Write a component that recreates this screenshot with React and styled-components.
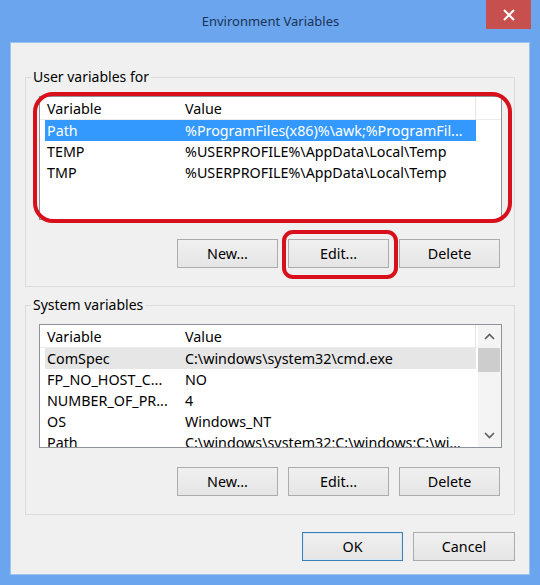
import React from "react";
import styled, { createGlobalStyle } from "styled-components";

const GlobalStyle = createGlobalStyle`
  html, body {
    margin: 0;
    padding: 0;
    background: #6ba5ee;
  }
  body {
    font-family: "Noto Sans", "Open Sans", sans-serif;
    color: #000;
  }
  * { box-sizing: border-box; }
`;

const Window = styled.div`
  width: 540px;
  height: 585px;
  background: #6ba5ee;
  display: flex;
  flex-direction: column;
  padding: 0 10px 10px 10px;
`;

const TitleBar = styled.div`
  height: 42px;
  display: grid;
  grid-template-columns: 1fr auto 1fr;
  align-items: start;
  margin-right: -1px;
`;

const Title = styled.div`
  grid-column: 2;
  font-size: 13px;
  line-height: 42px;
  color: #1a3456;
`;

const CloseButton = styled.div`
  grid-column: 3;
  justify-self: end;
  width: 45px;
  height: 29px;
  background: #c7504f;
  display: flex;
  align-items: center;
  justify-content: center;
`;

const Client = styled.div`
  flex: 1;
  background: #f0f0f0;
  border: 1px solid #9cc3f2;
  padding: 25px 14px 13px 14px;
  display: flex;
  flex-direction: column;
`;

const Group = styled.fieldset`
  margin: ${(p) => (p.$first ? "0" : "9px 0 0 0")};
  min-width: 0;
  border: 1px solid #dcdcdc;
  padding: 10px 12px 18px 13px;
  display: flex;
  flex-direction: column;
`;

const Legend = styled.legend`
  font-size: 14px;
  line-height: 18px;
  padding: 0 2px;
  margin-left: -8px;
`;

const ListBox = styled.div`
  position: relative;
  height: 124px;
  background: #fff;
  border: 1px solid #8f9399;
  display: flex;
`;

const ListContent = styled.div`
  flex: 1;
  min-width: 0;
  overflow: hidden;
`;

const HeaderRow = styled.div`
  height: 23px;
  border-bottom: 1px solid #ececec;
  display: grid;
  grid-template-columns: 138px 293px 1fr;
  padding-left: 5px;
  font-size: 14.3px;
  align-items: center;
`;

const HeaderCell = styled.div`
  height: 100%;
  display: flex;
  align-items: center;
  padding-left: 2px;
  border-right: ${(p) => (p.$divider ? "1px solid #e5e5e5" : "none")};
`;

const Row = styled.div`
  margin-left: 5px;
  width: 431px;
  height: 21px;
  display: grid;
  grid-template-columns: 138px 293px;
  align-items: center;
  font-size: 14.3px;
  background: ${(p) =>
    p.$state === "active" ? "#3399ff" : p.$state === "inactive" ? "#e6e6e6" : "transparent"};
  color: ${(p) => (p.$state === "active" ? "#fff" : "#000")};
`;

const Cell = styled.div`
  padding-left: 2px;
  white-space: nowrap;
  overflow: hidden;
  line-height: 21px;
`;

const ScrollBar = styled.div`
  width: 23px;
  background: #f4f4f4;
  display: flex;
  flex-direction: column;
`;

const ScrollArrow = styled.div`
  height: 23px;
  display: flex;
  align-items: center;
  justify-content: center;
`;

const ScrollTrack = styled.div`
  flex: 1;
  display: flex;
  flex-direction: column;
`;

const ScrollThumb = styled.div`
  height: 24px;
  margin-right: 1px;
  background: #cdcdcd;
`;

const ButtonRow = styled.div`
  display: flex;
  justify-content: flex-end;
  gap: 10px;
  margin-top: ${(p) => p.$top || 19}px;
  padding-right: ${(p) => p.$inset || 0}px;
`;

const Button = styled.div`
  position: relative;
  width: ${(p) => p.$w || 101}px;
  height: 29px;
  border: 1px solid ${(p) => (p.$default ? "#3c7fb1" : "#acacac")};
  box-shadow: ${(p) => (p.$default ? "inset 0 0 0 1px #d5e8f8" : "none")};
  background: linear-gradient(#f0f0f0, #e5e5e5);
  display: flex;
  align-items: center;
  justify-content: center;
  font-size: 14.3px;
  color: #000;
`;

/* hand-drawn red callout ring over a control */
const Callout = styled.span`
  position: absolute;
  top: ${(p) => p.$t}px;
  left: ${(p) => p.$l}px;
  right: ${(p) => p.$r}px;
  bottom: ${(p) => p.$b}px;
  border: 4px solid #d8101c;
  border-radius: ${(p) => p.$radius}px;
  pointer-events: none;
  z-index: 2;
`;

const Chevron = ({ up }) => (
  <svg width="11" height="7" viewBox="0 0 11 7">
    <polyline
      points={up ? "1,6 5.5,1.5 10,6" : "1,1 5.5,5.5 10,1"}
      fill="none"
      stroke="#606060"
      strokeWidth="1.7"
    />
  </svg>
);

const userVars = [
  ["Path", "%ProgramFiles(x86)%\\awk;%ProgramFil...", "active"],
  ["TEMP", "%USERPROFILE%\\AppData\\Local\\Temp"],
  ["TMP", "%USERPROFILE%\\AppData\\Local\\Temp"],
];

const systemVars = [
  ["ComSpec", "C:\\windows\\system32\\cmd.exe", "inactive"],
  ["FP_NO_HOST_C...", "NO"],
  ["NUMBER_OF_PR...", "4"],
  ["OS", "Windows_NT"],
  ["Path", "C:\\windows\\system32;C:\\windows;C:\\wi..."],
];

const Header = () => (
  <HeaderRow>
    <HeaderCell>Variable</HeaderCell>
    <HeaderCell $divider>Value</HeaderCell>
  </HeaderRow>
);

const Rows = ({ items }) =>
  items.map(([name, value, state]) => (
    <Row key={name + value} $state={state}>
      <Cell>{name}</Cell>
      <Cell>{value}</Cell>
    </Row>
  ));

export default function App() {
  return (
    <>
      <GlobalStyle />
      <Window>
        <TitleBar>
          <Title>Environment Variables</Title>
          <CloseButton>
            <svg width="12" height="12" viewBox="0 0 12 12">
              <path d="M1 1 L11 11 M11 1 L1 11" stroke="#fff" strokeWidth="2" />
            </svg>
          </CloseButton>
        </TitleBar>
        <Client>
          <Group $first>
            <Legend>User variables for</Legend>
            <ListBox>
              <ListContent>
                <Header />
                <Rows items={userVars} />
              </ListContent>
              <Callout $t={-5} $l={-7} $r={-11} $b={-4} $radius={20} />
            </ListBox>
            <ButtonRow $inset={2}>
              <Button>New...</Button>
              <Button>
                Edit...
                <Callout $t={-10} $l={-7} $r={-10} $b={-12} $radius={11} />
              </Button>
              <Button>Delete</Button>
            </ButtonRow>
          </Group>
          <Group>
            <Legend>System variables</Legend>
            <ListBox>
              <ListContent>
                <Header />
                <Rows items={systemVars} />
              </ListContent>
              <ScrollBar>
                <ScrollArrow>
                  <Chevron up />
                </ScrollArrow>
                <ScrollTrack>
                  <ScrollThumb />
                </ScrollTrack>
                <ScrollArrow>
                  <Chevron />
                </ScrollArrow>
              </ScrollBar>
            </ListBox>
            <ButtonRow $inset={2}>
              <Button>New...</Button>
              <Button>Edit...</Button>
              <Button>Delete</Button>
            </ButtonRow>
          </Group>
          <ButtonRow $top={17}>
            <Button $default>OK</Button>
            <Button $w={102}>Cancel</Button>
          </ButtonRow>
        </Client>
      </Window>
    </>
  );
}
